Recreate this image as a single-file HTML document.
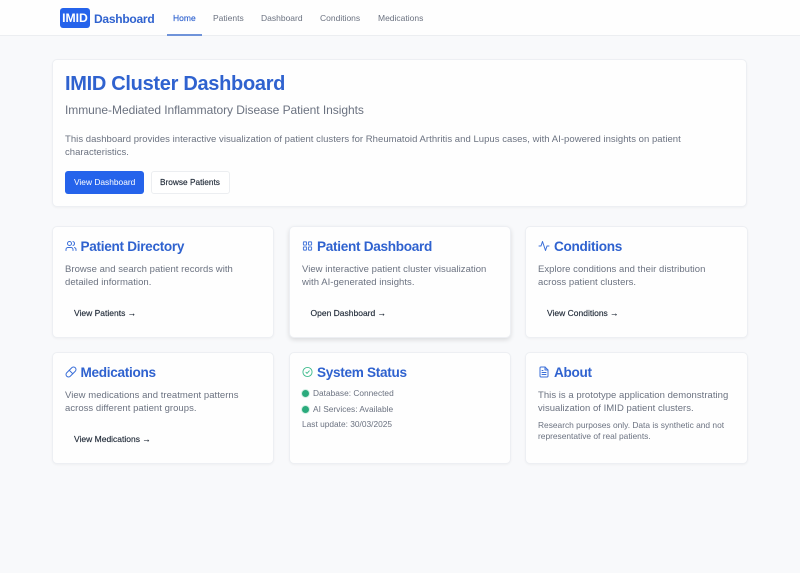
<!DOCTYPE html>
<html lang="en"><head><meta charset="utf-8"><title>IMID Dashboard</title>
<style>
*{box-sizing:border-box}
html,body{margin:0;padding:0}
body{width:800px;height:573px;position:relative;overflow:hidden;background:#f8f9fb;font-family:"Liberation Sans",sans-serif;color:#6b7280}
.t{position:absolute;white-space:nowrap;line-height:1;filter:blur(.25px)}
header{position:absolute;left:0;top:0;width:800px;height:36px;background:#fefefe;border-bottom:1px solid #eceef1}
.logo{position:absolute;left:60px;top:8px;width:30px;height:20px;background:#2563eb;border-radius:3px;color:#fff;font-weight:700;font-size:12.2px;line-height:20px;text-align:center}
.nav{font-size:8.5px;top:13.5px;color:#6b7280;font-weight:400}
.card{position:absolute;background:#fefefe;border:1px solid #edeff3;border-radius:5px;box-shadow:0 1px 2px rgba(0,0,0,.04)}
.h{font-size:13.6px;font-weight:700;color:#2f62cf;letter-spacing:-.3px}
.p{font-size:9.5px;color:#6b7280;letter-spacing:.04px}
.a{font-size:8.5px;color:#1f2937;-webkit-text-stroke:.15px #1f2937}
.s{font-size:8.35px}
svg{position:absolute;fill:none;stroke:#3b6fd8;stroke-width:2;stroke-linecap:round;stroke-linejoin:round}
.dot{position:absolute;width:7px;height:7px;border-radius:50%;background:#2aaa7c;box-shadow:0 0 0 1px #d3f0e4}
</style></head><body>
<header>
<div class="logo">IMID</div>
<div class="t" style="left:94px;top:12.5px;font-size:12px;font-weight:700;color:#2f62cf;letter-spacing:-.25px">Dashboard</div>
<div class="t nav" style="left:173px;color:#2f62cf;-webkit-text-stroke:.15px #2f62cf">Home</div>
<div style="position:absolute;left:167px;top:34px;width:35px;height:2px;background:#6f93d9"></div>
<div class="t nav" style="left:213px">Patients</div>
<div class="t nav" style="left:261px">Dashboard</div>
<div class="t nav" style="left:320px">Conditions</div>
<div class="t nav" style="left:378px">Medications</div>
</header>

<div class="card" style="left:51.7px;top:58.7px;width:695.6px;height:148.6px"></div>
<div class="t" style="left:65px;top:74px;font-size:20px;font-weight:700;color:#2f62cf;letter-spacing:-.3px">IMID Cluster Dashboard</div>
<div class="t" style="left:65px;top:104px;font-size:12px;color:#6b7280;letter-spacing:-.05px">Immune-Mediated Inflammatory Disease Patient Insights</div>
<div class="t p" style="left:65px;top:134.5px">This dashboard provides interactive visualization of patient clusters for Rheumatoid Arthritis and Lupus cases, with AI-powered insights on patient</div>
<div class="t p" style="left:65px;top:147.5px">characteristics.</div>
<div style="position:absolute;left:65px;top:171px;width:79px;height:23px;background:#2563eb;border-radius:3px"></div>
<div class="t" style="left:74px;top:178.3px;font-size:8.4px;color:#fff">View Dashboard</div>
<div style="position:absolute;left:151px;top:171px;width:79px;height:23px;background:#fff;border:1px solid #eceef1;border-radius:3px"></div>
<div class="t a" style="left:160px;top:178.3px;font-size:8.3px">Browse Patients</div>

<div class="card" style="left:51.7px;top:225.7px;width:222.5px;height:112.2px"></div>
<div class="card" style="left:288.7px;top:225.7px;width:222.5px;height:112.2px;box-shadow:0 2px 5px rgba(0,0,0,.12)"></div>
<div class="card" style="left:525px;top:225.7px;width:222.5px;height:112.2px"></div>
<div class="card" style="left:51.7px;top:351.7px;width:222.5px;height:112.4px"></div>
<div class="card" style="left:288.7px;top:351.7px;width:222.5px;height:112.4px"></div>
<div class="card" style="left:525px;top:351.7px;width:222.5px;height:112.4px"></div>

<svg style="left:65px;top:240px" width="12" height="12" viewBox="0 0 24 24"><path d="M16 21v-2a4 4 0 0 0-4-4H6a4 4 0 0 0-4 4v2"/><circle cx="9" cy="7" r="4"/><path d="M22 21v-2a4 4 0 0 0-3-3.87M16 3.13a4 4 0 0 1 0 7.75"/></svg>
<div class="t h" style="left:80.5px;top:239.5px">Patient Directory</div>
<div class="t p" style="left:65px;top:264.5px">Browse and search patient records with</div>
<div class="t p" style="left:65px;top:277.5px">detailed information.</div>
<div class="t a" style="left:74px;top:309px">View Patients →</div>

<svg style="left:302px;top:240px" width="11" height="12" viewBox="0 0 24 24"><rect x="3" y="3" width="7" height="7" rx="1"/><rect x="14" y="3" width="7" height="7" rx="1"/><rect x="14" y="14" width="7" height="7" rx="1"/><rect x="3" y="14" width="7" height="7" rx="1"/></svg>
<div class="t h" style="left:317px;top:239.5px">Patient Dashboard</div>
<div class="t p" style="left:302px;top:264.5px">View interactive patient cluster visualization</div>
<div class="t p" style="left:302px;top:277.5px">with AI-generated insights.</div>
<div class="t a" style="left:310.5px;top:309px">Open Dashboard →</div>

<svg style="left:538px;top:240px" width="12" height="12" viewBox="0 0 24 24"><path d="M22 12h-4l-3 9L9 3l-3 9H2"/></svg>
<div class="t h" style="left:554px;top:239.5px">Conditions</div>
<div class="t p" style="left:538px;top:264.5px">Explore conditions and their distribution</div>
<div class="t p" style="left:538px;top:277.5px">across patient clusters.</div>
<div class="t a" style="left:547px;top:309px">View Conditions →</div>

<svg style="left:65px;top:366px" width="12" height="12" viewBox="0 0 24 24"><path d="m10.5 20.5 10-10a4.95 4.95 0 1 0-7-7l-10 10a4.95 4.95 0 1 0 7 7Z"/><path d="m8.5 8.5 7 7"/></svg>
<div class="t h" style="left:80.5px;top:365.5px">Medications</div>
<div class="t p" style="left:65px;top:390.5px">View medications and treatment patterns</div>
<div class="t p" style="left:65px;top:403.5px">across different patient groups.</div>
<div class="t a" style="left:74px;top:435px">View Medications →</div>

<svg style="left:302px;top:366px;stroke:#3dbb8c" width="11" height="12" viewBox="0 0 24 24"><circle cx="12" cy="12" r="10"/><path d="m8.5 12.5 2.5 2.5 5-5.5"/></svg>
<div class="t h" style="left:317px;top:365.5px">System Status</div>
<div class="dot" style="left:302px;top:390px"></div>
<div class="t s" style="left:313px;top:389px">Database: Connected</div>
<div class="dot" style="left:302px;top:405.5px"></div>
<div class="t s" style="left:313px;top:404.5px">AI Services: Available</div>
<div class="t s" style="left:302px;top:420px">Last update: 30/03/2025</div>

<svg style="left:538px;top:366px" width="12" height="12" viewBox="0 0 24 24"><path d="M14 2H6a2 2 0 0 0-2 2v16a2 2 0 0 0 2 2h12a2 2 0 0 0 2-2V8Z"/><path d="M14 2v6h6M16 13H8M16 17H8M10 9H8"/></svg>
<div class="t h" style="left:554px;top:365.5px">About</div>
<div class="t p" style="left:538px;top:390.5px">This is a prototype application demonstrating</div>
<div class="t p" style="left:538px;top:403.5px">visualization of IMID patient clusters.</div>
<div class="t" style="left:538px;top:421px;font-size:8.4px">Research purposes only. Data is synthetic and not</div>
<div class="t" style="left:538px;top:432px;font-size:8.4px">representative of real patients.</div>
</body></html>
